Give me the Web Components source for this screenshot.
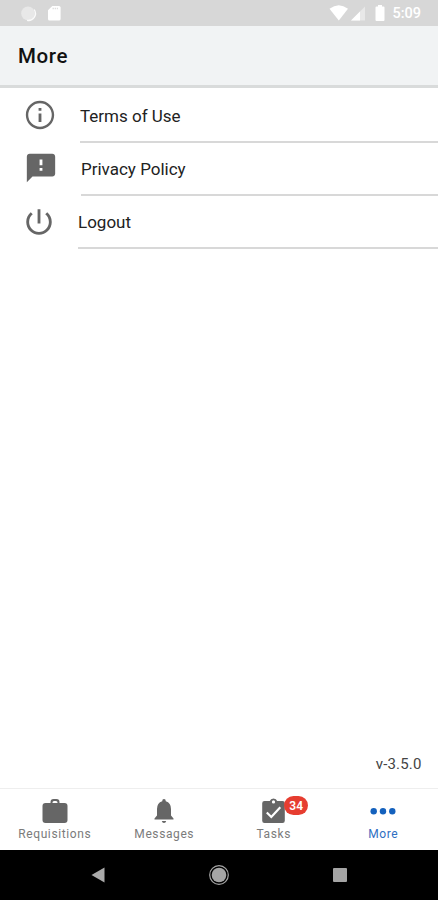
<!DOCTYPE html>
<html lang="en">
<head>
<meta charset="utf-8">
<title>More</title>
<style>
html,body{margin:0;height:100%;background:#fff;font-family:Roboto,"Liberation Sans",sans-serif}
</style>
</head>
<body>
<more-screen></more-screen>
<script>
const define = (name, html) => customElements.define(name, class extends HTMLElement {
  constructor() {
    super();
    const t = document.createElement('template');
    t.innerHTML = html;
    this.attachShadow({mode: 'open'}).append(t.content.cloneNode(true));
  }
});

define('status-bar', `
<style>
:host{display:flex;justify-content:space-between;box-sizing:border-box;height:26px;background:#d7d7d7;padding:0 17px 0 20px}
svg{display:block}
.right{display:flex}
span{font-size:14.500px;font-weight:500;line-height:28px;color:#fff;margin-left:6px}
</style>
<svg width="44" height="26"><circle cx="8" cy="13.400" r="6.800" fill="#e8e8e8"/><path d="M14.200 9.500A7 7 0 0 1 7 20.300" fill="none" stroke="#fafafa" stroke-width="1.300"/>
<path d="M32.300 6H39Q40.600 6 40.600 7.600V19Q40.600 20.600 39 20.600H29.600Q28 20.600 28 19V10.300Z" fill="#fff"/><path d="M32.500 8.500H38" stroke="#dedede" stroke-width="1.400" stroke-dasharray="1.400 .8"/></svg>
<div class="right"><svg width="57" height="26"><path d="M0.500 8.800Q9.800 1.800 19 8.800L9.800 20.400Z" fill="#fff"/>
<path d="M22 20.600L36 6.600V20.600Z" fill="#e8e8e8"/><path d="M22 20.600L31 11.600V20.600Z" fill="#fff"/>
<path d="M49 5h4v1.500h1.500q1 0 1 1V20q0 1-1 1h-7q-1 0-1-1V7.500q0-1 1-1H49Z" fill="#fff"/></svg><span>5:09</span></div>`);

define('app-header', `
<style>
:host{display:block;box-sizing:border-box;height:62px;background:#f1f3f4;border-bottom:3px solid #d9dbdb;padding-left:18px;font-size:20.500px;font-weight:500;line-height:61px;letter-spacing:.6px;color:#111}
</style><slot></slot>`);

define('menu-row', `
<style>
:host{display:flex;height:53px;padding-left:var(--lead,23px)}
::slotted(svg){display:block;flex:none;width:34px;height:34px;margin-top:var(--top,8px);fill:#666}
.label{flex:1;margin-left:var(--gap,23px);box-sizing:border-box;border-bottom:2px solid #d8d8d8;font-size:17px;line-height:52px;color:#222;white-space:nowrap}
</style><slot name="icon"></slot><div class="label"><slot></slot></div>`);

define('tab-item', `
<style>
:host{display:flex;flex-direction:column;align-items:center;flex:1;color:#7b7b7b;font-size:12px;line-height:18px;letter-spacing:.6px}
:host([active]){color:#2f6fc2}
.icon{position:relative;height:27px;margin-top:9px}
::slotted(svg){display:block;fill:#666}
::slotted(b){position:absolute;left:22px;top:-2px;width:24px;height:19px;border-radius:10px;background:#e63d30;color:#fff;font-size:12px;font-weight:600;line-height:20px;text-align:center;letter-spacing:.2px}
</style><div class="icon"><slot name="icon"></slot><slot name="badge"></slot></div><slot></slot>`);

define('tab-bar', `
<style>:host{display:flex;box-sizing:border-box;height:62px;border-top:1px solid #eee;background:#fff}</style><slot></slot>`);

define('system-nav', `
<style>
:host{display:flex;align-items:center;justify-content:space-between;box-sizing:border-box;height:50px;padding:0 91px;background:#000}
svg{display:block}
</style>
<svg width="14" height="16"><path d="M0.500 8L13.500 .5V15.500Z" fill="#aaa"/></svg>
<svg width="22" height="22"><circle cx="11" cy="11" r="9.300" fill="none" stroke="#a5a5a5" stroke-width="1.200"/><circle cx="11" cy="11" r="7.300" fill="#a5a5a5"/></svg>
<svg width="14" height="14"><rect width="14" height="14" rx="1" fill="#a5a5a5"/></svg>`);

define('more-screen', `
<style>
:host{display:flex;flex-direction:column;height:900px;overflow:hidden;background:#fff}
main{flex:1;display:flex;flex-direction:column;padding-top:2px}
.version{margin:auto 16.500px 14px auto;font-size:15px;line-height:20px;color:#444;letter-spacing:.15px}
</style>
<status-bar></status-bar>
<app-header>More</app-header>
<main>
<menu-row><svg slot="icon" viewBox="0 0 24 24"><path d="M11 7h2v2h-2zm0 4h2v6h-2zm1-9C6.480 2 2 6.480 2 12s4.480 10 10 10 10-4.480 10-10S17.520 2 12 2zm0 18.300a8.300 8.300 0 1 1 0-16.600 8.300 8.300 0 0 1 0 16.600z"/></svg>Terms of Use</menu-row>
<menu-row style="--lead:23.500px;--gap:23.500px"><svg slot="icon" viewBox="0 0 24 24"><path transform="matrix(-1 0 0 1 24 0)" d="M20 2H4c-1.100 0-2 .9-2 2v12c0 1.100.9 2 2 2h14l4 4V4c0-1.100-.9-2-2-2zm-7 12h-2v-2h2v2zm0-4h-2V6h2v4z"/></svg>Privacy Policy</menu-row>
<menu-row style="--lead:22px;--gap:22px;--top:9px"><svg slot="icon" viewBox="0 0 24 24"><path d="M13 3h-2v10h2V3zm4.830 2.170l-1.420 1.420C17.990 7.860 19 9.810 19 12c0 3.870-3.130 7-7 7s-7-3.130-7-7c0-2.190 1.010-4.140 2.580-5.420L6.170 5.170C4.230 6.820 3 9.260 3 12c0 4.970 4.030 9 9 9s9-4.030 9-9c0-2.740-1.230-5.180-3.170-6.830z"/></svg>Logout</menu-row>
<div class="version">v-3.5.0</div>
</main>
<tab-bar>
<tab-item><svg slot="icon" width="26" height="26"><path d="M8.500 7V4.200Q8.500 1 11.500 1h3Q17.500 1 17.500 4.200V7H15.500V4.500Q15.500 3 14 3h-2Q10.500 3 10.500 4.500V7Z"/><rect x=".5" y="5" width="25" height="20" rx="3"/></svg>Requisitions</tab-item>
<tab-item><svg slot="icon" width="20" height="26"><path d="M10 1q1.800 0 1.800 2.200Q17 4.800 17 11v6.500l2.500 3V21.500H.5v-1l2.500-3V11Q3 4.800 8.200 3.200 8.200 1 10 1ZM7.800 23h4.400q-.4 2-2.200 2t-2.200-2Z"/></svg>Messages</tab-item>
<tab-item><svg slot="icon" width="23" height="26"><path fill-rule="evenodd" d="M2.500 3H7.800Q8.600 .5 11.500 .5T15.200 3H20.500q2.300 0 2.300 2.300V22.700q0 2.300-2.300 2.300H2.500Q.2 25 .2 22.700V5.300Q.2 3 2.500 3ZM11.500 2.300a1.600 1.600 0 1 0 0 3.200 1.600 1.600 0 0 0 0-3.200Z"/><path d="M4.800 14.500L9.300 19 18.300 9.300" fill="none" stroke="#fff" stroke-width="2.200"/></svg><b slot="badge">34</b>Tasks</tab-item>
<tab-item active><svg slot="icon" width="26" height="26" style="fill:#1461bd"><circle cx="3.700" cy="13.200" r="3.200"/><circle cx="13" cy="13.200" r="3.200"/><circle cx="22.300" cy="13.200" r="3.200"/></svg>More</tab-item>
</tab-bar>
<system-nav></system-nav>`);
</script>
</body>
</html>
